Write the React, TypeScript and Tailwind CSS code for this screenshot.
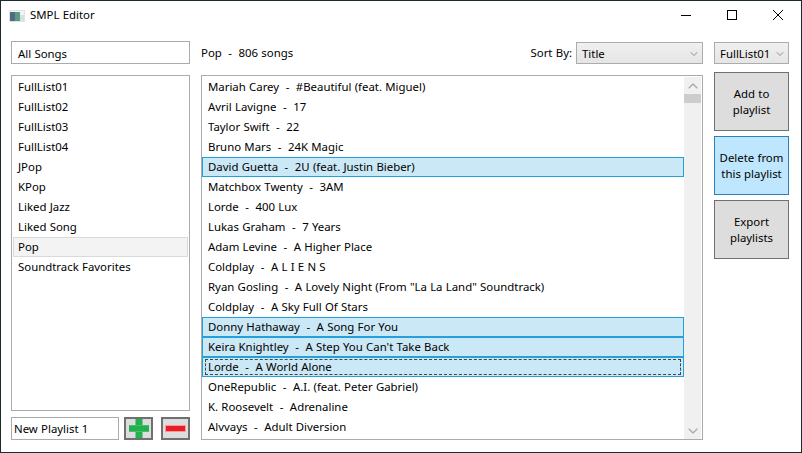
import React from 'react';
import { ChevronDown, ChevronUp } from 'lucide-react';

const playlists = ['FullList01', 'FullList02', 'FullList03', 'FullList04', 'JPop', 'KPop', 'Liked Jazz', 'Liked Song', 'Pop', 'Soundtrack Favorites'];

const songs = [
  { artist: 'Mariah Carey', title: '#Beautiful (feat. Miguel)' },
  { artist: 'Avril Lavigne', title: '17' },
  { artist: 'Taylor Swift', title: '22' },
  { artist: 'Bruno Mars', title: '24K Magic' },
  { artist: 'David Guetta', title: '2U (feat. Justin Bieber)', selected: true },
  { artist: 'Matchbox Twenty', title: '3AM' },
  { artist: 'Lorde', title: '400 Lux' },
  { artist: 'Lukas Graham', title: '7 Years' },
  { artist: 'Adam Levine', title: 'A Higher Place' },
  { artist: 'Coldplay', title: 'A L I E N S' },
  { artist: 'Ryan Gosling', title: 'A Lovely Night (From "La La Land" Soundtrack)' },
  { artist: 'Coldplay', title: 'A Sky Full Of Stars' },
  { artist: 'Donny Hathaway', title: 'A Song For You', selected: true },
  { artist: 'Keira Knightley', title: "A Step You Can't Take Back", selected: true },
  { artist: 'Lorde', title: 'A World Alone', selected: true, focused: true },
  { artist: 'OneRepublic', title: 'A.I. (feat. Peter Gabriel)' },
  { artist: 'K. Roosevelt', title: 'Adrenaline' },
  { artist: 'Alvvays', title: 'Adult Diversion' },
];

const WindowIcon = () => (
  <svg width="16" height="12" viewBox="0 0 16 12">
    <rect width="16" height="12" fill="#dfe3e3" />
    <rect x="1" y="1" width="14" height="10" fill="#f2f4f4" />
    <rect x="1" y="2" width="5" height="9" fill="#4d6c82" />
    <rect x="6" y="2" width="5" height="9" fill="#5d9a86" />
    <rect x="11" y="5" width="4" height="6" fill="#d4e2dc" />
  </svg>
);

const SideButton = ({ children, active, className }: { children: React.ReactNode; active?: boolean; className?: string }) => (
  <div
    className={`flex h-[59px] items-center justify-center border pt-[1px] text-center leading-[16px] ${
      active ? 'border-[#2c7fb8] bg-[#bee6fd]' : 'border-[#707070] bg-[#dddddd]'
    } ${className ?? ''}`}
  >
    {children}
  </div>
);

export default function App() {
  return (
    <div className="flex h-[453px] w-[802px] flex-col overflow-hidden border border-[#1a2a2e] bg-white text-[11.4px] text-black [word-spacing:0.3px] [font-family:'Noto_Sans','Open_Sans',sans-serif]">
      {/* title bar */}
      <div className="flex h-[29px] shrink-0 items-center">
        <div className="ml-[8px] mr-[5px] mt-[1px] flex">
          <WindowIcon />
        </div>
        <span className="mb-[2px]">SMPL Editor</span>
        <div className="ml-auto flex h-[28px] self-start">
          <div className="flex w-[46px] items-center justify-center">
            <svg width="10" height="10" viewBox="0 0 10 10"><path d="M0 5.5h10" stroke="#000" /></svg>
          </div>
          <div className="flex w-[46px] items-center justify-center">
            <svg width="10" height="10" viewBox="0 0 10 10"><rect x="0.5" y="0.5" width="9" height="9" fill="none" stroke="#000" /></svg>
          </div>
          <div className="flex w-[46px] items-center justify-center">
            <svg width="10" height="10" viewBox="0 0 10 10"><path d="M0 0l10 10M10 0L0 10" stroke="#000" /></svg>
          </div>
        </div>
      </div>

      <div className="flex gap-[11px] pl-[10px] pt-[11px]">
        {/* playlists */}
        <div className="flex w-[179px] flex-col">
          <div className="flex h-[23px] items-center border border-[#ababab] px-[6px] pt-[2px]">All Songs</div>
          <div className="mt-[11px] h-[336px] border border-[#ababab] p-[1px]">
            {playlists.map((name) => (
              <div
                key={name}
                className={`flex h-[20px] items-center ${
                  name === 'Pop' ? 'border border-[#dadada] bg-[#f3f3f3] px-[4px]' : 'px-[5px]'
                }`}
              >
                {name}
              </div>
            ))}
          </div>
          <div className="mt-[6px] flex h-[23px] items-stretch">
            <div className="flex w-[108px] items-center border border-[#ababab] px-[2px]">New Playlist 1</div>
            <div className="ml-[5px] flex w-[29px] items-center justify-center border-2 border-[#707070] bg-[#dddddd]">
              <svg width="20" height="19" viewBox="0 0 20 19">
                <path d="M6.5 0h7v6h6.5v7h-6.5v6h-7v-6H0V6h6.5z" fill="#22b14c" />
                <path d="M0 6.5h20M0 12.5h20" stroke="#a5dcb5" strokeWidth="0.6" opacity="0.5" />
              </svg>
            </div>
            <div className="ml-[8px] flex w-[29px] items-center justify-center border-2 border-[#707070] bg-[#dddddd]">
              <div className="h-[7px] w-[21px] border border-[#f29ba0] bg-[#ed1c24]" />
            </div>
          </div>
        </div>

        {/* songs */}
        <div className="flex w-[502px] flex-col">
          <div className="flex h-[23px] items-center">
            <span className="whitespace-pre">Pop  -  806 songs</span>
            <span className="ml-auto mr-[4px]">Sort By:</span>
            <div className="flex h-[22px] w-[127px] items-center justify-between self-end border border-[#acacac] bg-gradient-to-b from-[#f0f0f0] to-[#e5e5e5] pl-[5px] pr-[2px] pt-[1px]">
              Title
              <ChevronDown size={12} strokeWidth={1.5} color="#707070" />
            </div>
          </div>
          <div className="mt-[11px] flex h-[365px] border border-[#ababab] pr-[1px] pt-[1px]">
            <div className="min-w-0 flex-1 overflow-hidden">
              {songs.map((song, i) => (
                <div
                  key={i}
                  className={`flex h-[20px] items-center whitespace-pre ${
                    song.focused
                      ? 'border border-[#26a0da] bg-[#cbe8f6] px-[2px]'
                      : song.selected
                        ? 'border border-[#26a0da] bg-[#cbe8f6] px-[5px]'
                        : 'px-[6px]'
                  }`}
                >
                  {song.focused ? (
                    <span className="flex h-[16px] flex-1 items-center border border-dashed border-[#444444] pl-[2px]">{`${song.artist}  -  ${song.title}`}</span>
                  ) : (
                    `${song.artist}  -  ${song.title}`
                  )}
                </div>
              ))}
            </div>
            <div className="flex w-[17px] shrink-0 flex-col items-center bg-[#f0f0f0]">
              <div className="flex h-[17px] items-center justify-center"><ChevronUp size={16} strokeWidth={1.75} color="#a6a6a6" /></div>
              <div className="h-[9px] w-full bg-[#cdcdcd]" />
              <div className="mt-auto flex h-[17px] items-center justify-center"><ChevronDown size={16} strokeWidth={1.75} color="#a6a6a6" /></div>
            </div>
          </div>
        </div>

        {/* actions */}
        <div className="flex w-[75px] flex-col">
          <div className="mt-[1px] flex h-[22px] items-center justify-between border border-[#acacac] bg-gradient-to-b from-[#f0f0f0] to-[#e5e5e5] pl-[5px] pr-[2px] pt-[1px]">
            FullList01
            <ChevronDown size={12} strokeWidth={1.5} color="#707070" />
          </div>
          <SideButton className="mt-[8px]">Add to<br />playlist</SideButton>
          <SideButton active className="mt-[5px]">Delete from<br />this playlist</SideButton>
          <SideButton className="mt-[5px]">Export<br />playlists</SideButton>
        </div>
      </div>
    </div>
  );
}
